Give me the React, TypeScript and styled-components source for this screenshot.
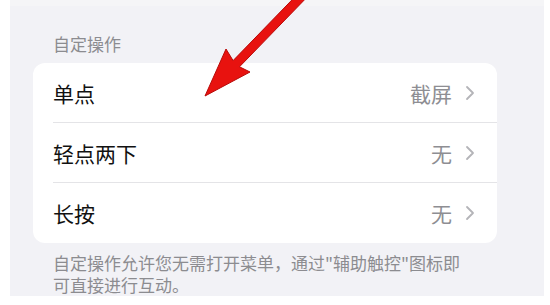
import React from "react";
import styled, { createGlobalStyle } from "styled-components";

const Global = createGlobalStyle`
  html, body { margin: 0; padding: 0; background: #ffffff; }
  body { font-family: "Noto Sans CJK SC", "Noto Sans", sans-serif; }
`;

const Page = styled.div`
  position: relative;
  width: 550px;
  height: 305px;
  overflow: hidden;
  background: #ffffff;
`;

const Panel = styled.div`
  margin-left: 10px;
  width: 534px;
  height: 296px;
  box-sizing: border-box;
  background: #f2f2f6;
  border-top: 6px solid #f5f5f7;
  padding: 28px 0 0 23px;
`;

const SectionTitle = styled.div`
  margin-left: 20px;
  font-size: 17px;
  line-height: 20px;
  color: #8c8c90;
  margin-bottom: 9px;
`;

const Card = styled.div`
  width: 464px;
  background: #ffffff;
  border-radius: 12px;
  overflow: hidden;
`;

const Row = styled.div<{ $last?: boolean }>`
  display: flex;
  align-items: center;
  height: 60px;
  margin-left: 20px;
  padding-right: 22px;
  box-sizing: border-box;
  border-bottom: ${(p) => (p.$last ? "none" : "1px solid #e4e4e7")};
`;

const Label = styled.div`
  flex: 1;
  font-size: 21px;
  color: #111111;
`;

const Value = styled.div`
  font-size: 21px;
  color: #8e8e93;
  margin-right: 13px;
`;

const Footer = styled.div`
  margin: 9px 0 0 20px;
  width: 416px;
  font-size: 17px;
  line-height: 22px;
  color: #8c8c90;
`;

const Overlay = styled.svg`
  position: absolute;
  left: 0;
  top: 0;
  pointer-events: none;
`;

const Chevron = () => (
  <svg width="10" height="16" viewBox="0 0 10 16">
    <path d="M2 2 L8 8 L2 14" fill="none" stroke="#b4b4b8" strokeWidth="1.8" strokeLinecap="round" strokeLinejoin="round" />
  </svg>
);

const rows = [
  { label: "单点", value: "截屏" },
  { label: "轻点两下", value: "无" },
  { label: "长按", value: "无" },
];

export default function App() {
  return (
    <Page>
      <Global />
      <Panel>
        <SectionTitle>自定操作</SectionTitle>
        <Card>
          {rows.map((r, i) => (
            <Row key={r.label} $last={i === rows.length - 1}>
              <Label>{r.label}</Label>
              <Value>{r.value}</Value>
              <Chevron />
            </Row>
          ))}
        </Card>
        <Footer>自定操作允许您无需打开菜单，通过"辅助触控"图标即可直接进行互动。</Footer>
      </Panel>
      <Overlay width="550" height="305" viewBox="0 0 550 305">
        <polygon
          points="205,96 250,72 239.5,66.8 316.1,-12.2 309.7,-18.4 233.1,60.6 226,49"
          fill="#e8120f"
          stroke="#b80a08"
          strokeWidth="1"
          strokeLinejoin="round"
        />
      </Overlay>
    </Page>
  );
}
